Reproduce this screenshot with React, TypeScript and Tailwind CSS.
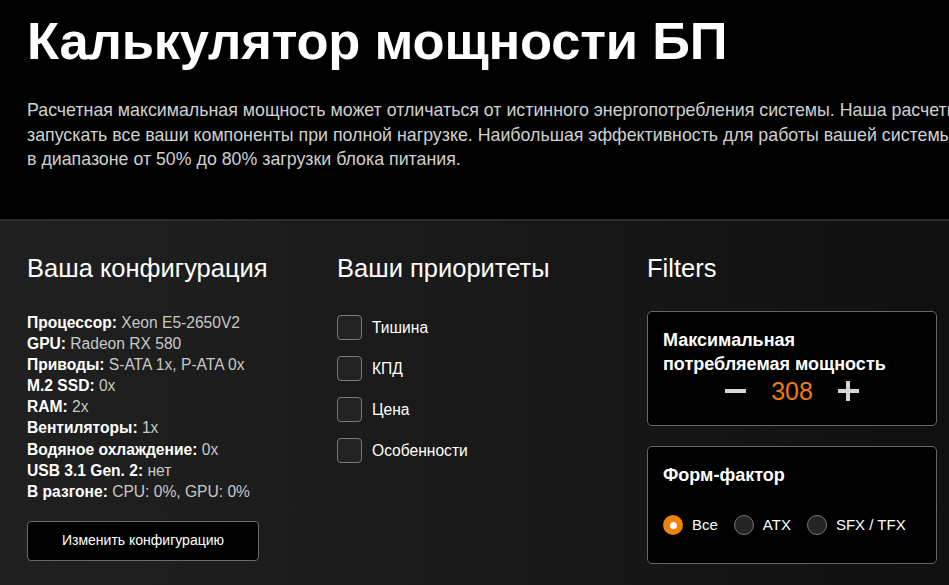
import React, { useState } from 'react';

const config: [string, string][] = [
  ['Процессор:', 'Xeon E5-2650V2'],
  ['GPU:', 'Radeon RX 580'],
  ['Приводы:', 'S-ATA 1x, P-ATA 0x'],
  ['M.2 SSD:', '0x'],
  ['RAM:', '2x'],
  ['Вентиляторы:', '1x'],
  ['Водяное охлаждение:', '0x'],
  ['USB 3.1 Gen. 2:', 'нет'],
  ['В разгоне:', 'CPU: 0%, GPU: 0%'],
];

const priorities = ['Тишина', 'КПД', 'Цена', 'Особенности'];
const formFactors = ['Все', 'ATX', 'SFX / TFX'];

export default function App() {
  const [watts, setWatts] = useState(308);
  const [checked, setChecked] = useState<string[]>([]);
  const [form, setForm] = useState('Все');

  const toggle = (p: string) =>
    setChecked((c) => (c.includes(p) ? c.filter((x) => x !== p) : [...c, p]));

  return (
    <div className="w-[949px] h-[585px] overflow-hidden bg-black text-white font-['Liberation_Sans',Arial,sans-serif]">
      {/* header */}
      <div className="h-[219px] px-[27px] pt-[9px]">
        <h1 className="text-[52.5px] leading-[64px] font-bold tracking-[-0.2px]">Калькулятор мощности БП</h1>
        <p className="mt-[25px] text-[17.8px] leading-[24.5px] text-[#d0d0d0] whitespace-nowrap">
          Расчетная максимальная мощность может отличаться от истинного энергопотребления системы. Наша расчетная мощность позволяет
          <br />
          запускать все ваши компоненты при полной нагрузке. Наибольшая эффективность для работы вашей системы достигается
          <br />
          в диапазоне от 50% до 80% загрузки блока питания.
        </p>
      </div>

      {/* body */}
      <div className="h-[366px] border-t-2 border-[#2c2c2c] bg-gradient-to-r from-[#202020] via-[#191919] to-[#101010] px-[27px] pt-[32px]">
        <div className="grid grid-cols-[310px_310px_290px]">
          {/* configuration */}
          <div>
            <h2 className="text-[25.5px] leading-[30px] font-normal">Ваша конфигурация</h2>
            <ul className="mt-[29px] text-[15.6px] leading-[21.1px]">
              {config.map(([k, v]) => (
                <li key={k}>
                  <span className="font-bold text-white">{k}</span>{' '}
                  <span className="text-[#c8c8c8]">{v}</span>
                </li>
              ))}
            </ul>
            <button className="mt-[19px] w-[232px] h-[40px] rounded-[4px] border border-[#6a6a6a] bg-black text-[14px] text-white">
              Изменить конфигурацию
            </button>
          </div>

          {/* priorities */}
          <div>
            <h2 className="text-[25.5px] leading-[30px] font-normal">Ваши приоритеты</h2>
            <div className="mt-[32px] flex flex-col gap-[16px]">
              {priorities.map((p) => (
                <label key={p} className="flex items-center gap-[10px] cursor-pointer" onClick={() => toggle(p)}>
                  <span className="w-[25px] h-[25px] rounded-[4px] border border-[#7a7a7a] bg-[#222222] flex items-center justify-center text-[14px]">
                    {checked.includes(p) ? '✓' : ''}
                  </span>
                  <span className="text-[15.6px]">{p}</span>
                </label>
              ))}
            </div>
          </div>

          {/* filters */}
          <div>
            <h2 className="text-[25.5px] leading-[30px] font-normal">Filters</h2>
            <div className="mt-[28px] h-[115px] rounded-[5px] border border-[#666666] bg-black px-[15px] pt-[16px]">
              <div className="text-[18px] leading-[24px] font-bold">
                Максимальная
                <br />
                потребляемая мощность
              </div>
              <div className="flex items-center justify-center gap-[25px]">
                <button onClick={() => setWatts((w) => w - 1)} className="w-[21px] h-[30px] flex items-center justify-center">
                  <span className="block w-[21px] h-[4px] bg-[#d6d6d6]" />
                </button>
                <span className="text-[25px] leading-[30px] text-[#f27b0a]">{watts}</span>
                <button onClick={() => setWatts((w) => w + 1)} className="relative w-[21px] h-[30px] flex items-center justify-center">
                  <span className="block w-[21px] h-[4px] bg-[#d6d6d6]" />
                  <span className="absolute left-[8.5px] top-[5px] block w-[4px] h-[20px] bg-[#d6d6d6]" />
                </button>
              </div>
            </div>

            <div className="mt-[20px] h-[118px] rounded-[5px] border border-[#666666] bg-black px-[15px] pt-[16px]">
              <div className="text-[18px] leading-[24px] font-bold">Форм-фактор</div>
              <div className="mt-[27px] flex items-center gap-[16px] whitespace-nowrap">
                {formFactors.map((f) => (
                  <label key={f} className="flex items-center shrink-0 cursor-pointer" onClick={() => setForm(f)}>
                    <span
                      className={
                        form === f
                          ? 'w-[20px] h-[20px] rounded-full bg-[#f0820a] flex items-center justify-center'
                          : 'w-[20px] h-[20px] rounded-full bg-[#242424] border border-[#777777]'
                      }
                    >
                      {form === f && <span className="w-[7px] h-[7px] rounded-full bg-white" />}
                    </span>
                    <span className="ml-[9px] text-[15px]">{f}</span>
                  </label>
                ))}
              </div>
            </div>
          </div>
        </div>
      </div>
    </div>
  );
}
